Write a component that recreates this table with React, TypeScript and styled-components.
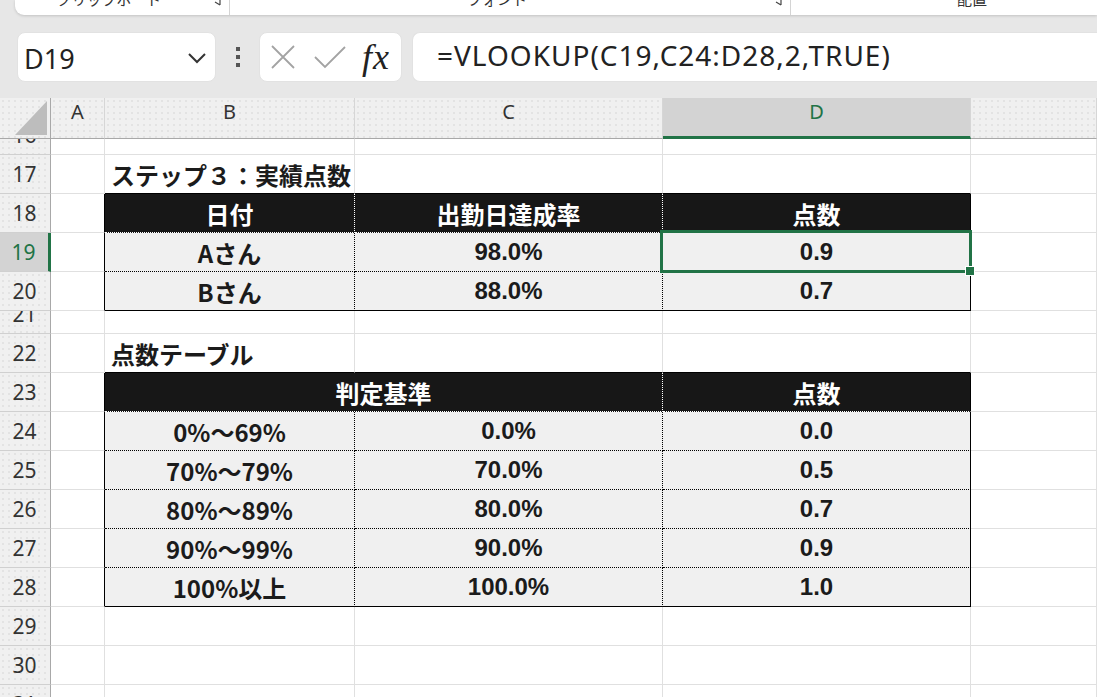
import React from 'react';
import styled, { createGlobalStyle, css } from 'styled-components';

const GREEN = '#217346';

const COL = { head: 51, a: 54, b: 250, c: 308, d: 308, e: 126 };

type Tone = 'grid' | 'black' | 'dot' | 'dotw';
type Fill = 'none' | 'head' | 'body';

const LINES: Record<Tone, string> = {
    grid: '1px solid #e0e0e0',
    black: '1px solid #000',
    dot: '1px dotted #000',
    dotw: '1px dotted #fff',
};

const FILLS: Record<Fill, string> = {
    none: '#fff',
    head: '#171717',
    body: '#f0f0f0',
};

const GlobalStyle = createGlobalStyle`
    html, body {
        margin: 0;
        padding: 0;
    }
    body {
        background: #e7e7e7;
        overflow: hidden;
        font-family: "Noto Sans", "Noto Sans CJK JP", sans-serif;
    }
`;

const headerTexture = css`
    background-color: #f0f0f0;
    background-image: radial-gradient(rgba(0, 0, 0, 0.06) 0.7px, transparent 0.9px);
    background-size: 6px 6px;
`;

const Screen = styled.div`
    width: 1097px;
    height: 697px;
    overflow: hidden;
    display: flex;
    flex-direction: column;
    background: #e7e7e7;
`;

/* ribbon (only its bottom edge is in view) */
const RibbonStrip = styled.div`
    height: 15px;
    padding-left: 15px;
    display: flex;
    flex-shrink: 0;
`;

const RibbonPanel = styled.div`
    flex: 1;
    display: flex;
    background: #fff;
    border-bottom-left-radius: 9px;
    box-shadow: 0 1px 3px rgba(0, 0, 0, 0.16);
    overflow: hidden;
`;

const RibbonGroup = styled.div<{ $w: number; $sep?: boolean }>`
    width: ${p => p.$w}px;
    flex-shrink: 0;
    display: flex;
    border-right: ${p => (p.$sep ? '1px solid #d4d4d4' : 'none')};
    height: 15px;
    box-sizing: border-box;
`;

const RibbonLabel = styled.div`
    flex: 1;
    text-align: center;
    font-family: "Noto Sans CJK JP", sans-serif;
    font-size: 15px;
    line-height: 15px;
    margin-top: -9px;
    color: #333;
`;

const Launcher = styled.div`
    width: 26px;
    display: flex;
    justify-content: center;
    margin-top: -4px;
`;

/* formula bar */
const FormulaBar = styled.div`
    display: flex;
    align-items: center;
    height: 50px;
    margin: 17px 0 16px 17px;
    flex-shrink: 0;
`;

const NameBox = styled.div`
    width: 199px;
    height: 50px;
    box-sizing: border-box;
    background: #fff;
    border: 1px solid #e2e2e2;
    border-radius: 8px;
    display: flex;
    align-items: center;
    justify-content: space-between;
    padding: 2px 8px 0 6px;
    font-size: 27px;
    color: #222;
`;

const Grip = styled.div`
    margin-left: 20px;
    display: flex;
    flex-direction: column;
    gap: 4px;
    span {
        width: 4px;
        height: 4px;
        background: #555;
    }
`;

const ButtonGroup = styled.div`
    width: 143px;
    height: 50px;
    margin-left: 19px;
    box-sizing: border-box;
    background: #fff;
    border: 1px solid #e2e2e2;
    border-radius: 8px;
    display: flex;
    align-items: center;
    padding-left: 11px;
    gap: 19px;
`;

const FxMark = styled.span`
    font-family: "Liberation Serif", serif;
    font-style: italic;
    font-size: 36px;
    line-height: 1;
    color: #222;
    margin-left: -3px;
    letter-spacing: 1px;
`;

const FormulaInput = styled.div`
    flex: 1;
    height: 50px;
    margin-left: 10px;
    box-sizing: border-box;
    background: #fff;
    border: 1px solid #e2e2e2;
    border-right: none;
    border-radius: 8px 0 0 8px;
    display: flex;
    align-items: center;
    padding: 0 0 4px 24px;
    font-size: 28px;
    letter-spacing: 1px;
    color: #222;
    white-space: nowrap;
`;

/* sheet */
const Sheet = styled.div`
    display: flex;
    flex-direction: column;
    background: #fff;
    flex: 1;
`;

const ColHeadRow = styled.div`
    display: flex;
    height: 41px;
    flex-shrink: 0;
`;

const Corner = styled.div`
    ${headerTexture};
    width: ${COL.head}px;
    box-sizing: border-box;
    border-right: 1px solid #a8a8a8;
    border-bottom: 1px solid #a8a8a8;
    display: flex;
    align-items: flex-end;
    justify-content: flex-end;
    padding: 0 3px 3px 0;
`;

const CornerTriangle = styled.div`
    width: 32px;
    height: 34px;
    background: #bdbdbd;
    clip-path: polygon(100% 0, 100% 100%, 0 100%);
`;

const ColHead = styled.div<{ $w: number; $active?: boolean }>`
    ${headerTexture};
    width: ${p => p.$w}px;
    flex-shrink: 0;
    box-sizing: border-box;
    border-right: 1px solid #d6d6d6;
    border-bottom: 1px solid #a8a8a8;
    display: flex;
    justify-content: center;
    padding-top: 4px;
    font-size: 20px;
    line-height: 20px;
    color: #333;
    ${p =>
        p.$active &&
        css`
            background: #d3d3d3;
            border-bottom: 3px solid ${GREEN};
            color: ${GREEN};
        `}
`;

const SheetRow = styled.div<{ $h: number }>`
    display: flex;
    height: ${p => p.$h}px;
    flex-shrink: 0;
`;

const RowHead = styled.div<{ $active?: boolean }>`
    ${headerTexture};
    width: ${COL.head}px;
    flex-shrink: 0;
    box-sizing: border-box;
    border-right: 1px solid #a8a8a8;
    border-bottom: 1px solid #d0d0d0;
    overflow: hidden;
    display: flex;
    align-items: flex-end;
    justify-content: center;
    padding: 0 1px 8px 0;
    font-size: 21px;
    line-height: 21px;
    color: #333;
    ${p =>
        p.$active &&
        css`
            background: #d3d3d3;
            border-right: 3px solid ${GREEN};
            color: ${GREEN};
        `}
`;

const Cell = styled.div<{
    $w: number;
    $fill?: Fill;
    $r?: Tone;
    $b?: Tone;
    $left?: boolean;
    $num?: boolean;
    $sel?: boolean;
}>`
    position: ${p => (p.$sel ? 'relative' : 'static')};
    width: ${p => p.$w}px;
    flex-shrink: 0;
    box-sizing: border-box;
    background: ${p => FILLS[p.$fill || 'none']};
    border-right: ${p => LINES[p.$r || 'grid']};
    border-bottom: ${p => LINES[p.$b || 'grid']};
    display: flex;
    align-items: center;
    justify-content: ${p => (p.$left ? 'flex-start' : 'center')};
    padding-left: ${p => (p.$left ? '6px' : '0')};
    white-space: nowrap;
    font-family: ${p =>
        p.$num ? '"Liberation Sans", "Noto Sans CJK JP", sans-serif' : '"Noto Sans CJK JP", sans-serif'};
    font-weight: 700;
    font-size: 24px;
    color: ${p => (p.$fill === 'head' ? '#fff' : '#1b1b1b')};
`;

const Selection = styled.div`
    position: absolute;
    top: -3px;
    left: -3px;
    right: -2px;
    bottom: -2px;
    border: 3px solid ${GREEN};
    pointer-events: none;
`;

const FillHandle = styled.div`
    position: absolute;
    right: -5px;
    bottom: -5px;
    width: 8px;
    height: 8px;
    background: ${GREEN};
    border: 1px solid #fff;
`;

type TCell = { text: string; w: number; num?: boolean; sel?: boolean };

const BlankRow = ({ n, h }: { n: number; h: number }) => (
    <SheetRow $h={h}>
        <RowHead>{n}</RowHead>
        <Cell $w={COL.a} />
        <Cell $w={COL.b} />
        <Cell $w={COL.c} />
        <Cell $w={COL.d} />
        <Cell $w={COL.e} />
    </SheetRow>
);

const TitleRow = ({ n, text }: { n: number; text: string }) => (
    <SheetRow $h={39}>
        <RowHead>{n}</RowHead>
        <Cell $w={COL.a} />
        <Cell $w={COL.b} $b="black" $left>
            {text}
        </Cell>
        <Cell $w={COL.c} $b="black" />
        <Cell $w={COL.d} $b="black" />
        <Cell $w={COL.e} />
    </SheetRow>
);

const TableRow = ({
    n,
    kind,
    last,
    active,
    cells,
}: {
    n: number;
    kind: 'head' | 'body';
    last?: boolean;
    active?: boolean;
    cells: TCell[];
}) => (
    <SheetRow $h={39}>
        <RowHead $active={active}>{n}</RowHead>
        <Cell $w={COL.a} $r="black" />
        {cells.map((c, i) => {
            const edge = i === cells.length - 1;
            const r: Tone = edge ? 'black' : kind === 'head' ? 'dotw' : 'dot';
            const b: Tone = kind === 'head' ? 'dotw' : last ? 'black' : 'dot';
            return (
                <Cell key={i} $w={c.w} $fill={kind} $r={r} $b={b} $num={c.num} $sel={c.sel}>
                    {c.text}
                    {c.sel && (
                        <>
                            <Selection />
                            <FillHandle />
                        </>
                    )}
                </Cell>
            );
        })}
        <Cell $w={COL.e} />
    </SheetRow>
);

const scores = [
    ['0%～69%', '0.0%', '0.0'],
    ['70%～79%', '70.0%', '0.5'],
    ['80%～89%', '80.0%', '0.7'],
    ['90%～99%', '90.0%', '0.9'],
    ['100%以上', '100.0%', '1.0'],
];

const App = () => {
    return (
        <Screen>
            <GlobalStyle />
            <RibbonStrip>
                <RibbonPanel>
                    <RibbonGroup $w={215} $sep>
                        <RibbonLabel>クリップボード</RibbonLabel>
                        <Launcher>
                            <svg width="10" height="10" viewBox="0 0 10 10">
                                <path d="M1 1h8v8M4 6l5 3" stroke="#444" strokeWidth="1.2" fill="none" />
                            </svg>
                        </Launcher>
                    </RibbonGroup>
                    <RibbonGroup $w={561} $sep>
                        <RibbonLabel>フォント</RibbonLabel>
                        <Launcher>
                            <svg width="10" height="10" viewBox="0 0 10 10">
                                <path d="M1 1h8v8M4 6l5 3" stroke="#444" strokeWidth="1.2" fill="none" />
                            </svg>
                        </Launcher>
                    </RibbonGroup>
                    <RibbonGroup $w={362}>
                        <RibbonLabel>配置</RibbonLabel>
                    </RibbonGroup>
                </RibbonPanel>
            </RibbonStrip>

            <FormulaBar>
                <NameBox>
                    <span>D19</span>
                    <svg width="20" height="12" viewBox="0 0 20 12">
                        <polyline points="2,2 10,10 18,2" stroke="#333" strokeWidth="2" fill="none" />
                    </svg>
                </NameBox>
                <Grip>
                    <span />
                    <span />
                    <span />
                </Grip>
                <ButtonGroup>
                    <svg width="24" height="24" viewBox="0 0 24 24">
                        <path d="M1 1L23 23M23 1L1 23" stroke="#a3a3a3" strokeWidth="1.8" fill="none" />
                    </svg>
                    <svg width="32" height="24" viewBox="0 0 32 24">
                        <polyline points="1,12 11,22 31,2" stroke="#a3a3a3" strokeWidth="1.8" fill="none" />
                    </svg>
                    <FxMark>fx</FxMark>
                </ButtonGroup>
                <FormulaInput>=VLOOKUP(C19,C24:D28,2,TRUE)</FormulaInput>
            </FormulaBar>

            <Sheet>
                <ColHeadRow>
                    <Corner>
                        <CornerTriangle />
                    </Corner>
                    <ColHead $w={COL.a}>A</ColHead>
                    <ColHead $w={COL.b}>B</ColHead>
                    <ColHead $w={COL.c}>C</ColHead>
                    <ColHead $w={COL.d} $active>
                        D
                    </ColHead>
                    <ColHead $w={COL.e} />
                </ColHeadRow>

                <BlankRow n={16} h={16} />
                <TitleRow n={17} text="ステップ３：実績点数" />
                <TableRow
                    n={18}
                    kind="head"
                    cells={[
                        { text: '日付', w: COL.b },
                        { text: '出勤日達成率', w: COL.c },
                        { text: '点数', w: COL.d },
                    ]}
                />
                <TableRow
                    n={19}
                    kind="body"
                    active
                    cells={[
                        { text: 'Aさん', w: COL.b },
                        { text: '98.0%', w: COL.c, num: true },
                        { text: '0.9', w: COL.d, num: true, sel: true },
                    ]}
                />
                <TableRow
                    n={20}
                    kind="body"
                    last
                    cells={[
                        { text: 'Bさん', w: COL.b },
                        { text: '88.0%', w: COL.c, num: true },
                        { text: '0.7', w: COL.d, num: true },
                    ]}
                />
                <BlankRow n={21} h={23} />
                <TitleRow n={22} text="点数テーブル" />
                <TableRow
                    n={23}
                    kind="head"
                    cells={[
                        { text: '判定基準', w: COL.b + COL.c },
                        { text: '点数', w: COL.d },
                    ]}
                />
                {scores.map(([range, rate, pt], i) => (
                    <TableRow
                        key={range}
                        n={24 + i}
                        kind="body"
                        last={i === scores.length - 1}
                        cells={[
                            { text: range, w: COL.b },
                            { text: rate, w: COL.c, num: true },
                            { text: pt, w: COL.d, num: true },
                        ]}
                    />
                ))}
                <BlankRow n={29} h={39} />
                <BlankRow n={30} h={39} />
                <BlankRow n={31} h={39} />
            </Sheet>
        </Screen>
    );
};

export default App;
